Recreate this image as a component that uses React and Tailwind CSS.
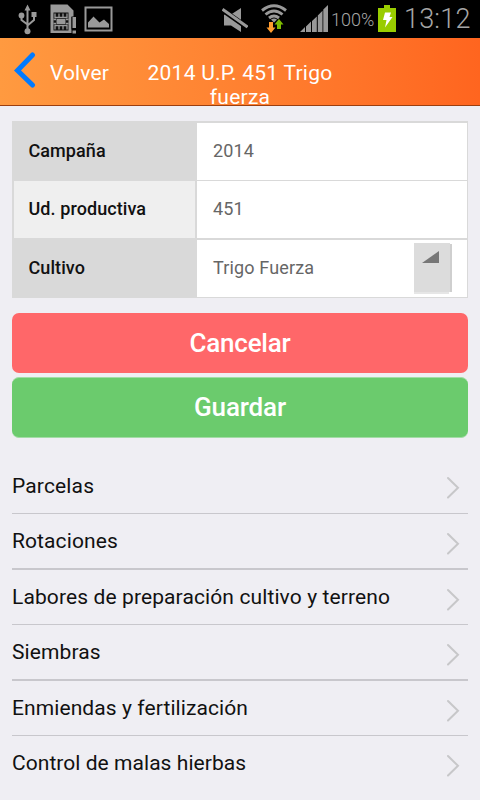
const items = [
  { label: 'Parcelas', row: 'h-14 border-b', text: 'leading-[56px] tracking-[0.15px]' },
  { label: 'Rotaciones', row: 'h-14 border-b-2', text: 'leading-[54px] tracking-[0.1px]' },
  { label: 'Labores de preparación cultivo y terreno', row: 'h-[55px] border-b', text: 'leading-[54px] tracking-[0.11px]' },
  { label: 'Siembras', row: 'h-14 border-b-2', text: 'leading-[54px] tracking-[0.1px]' },
  { label: 'Enmiendas y fertilización', row: 'h-[55px] border-b', text: 'leading-[54px] tracking-[0.09px]' },
  { label: 'Control de malas hierbas', row: 'h-16', text: 'leading-[54px] tracking-[0.05px]' },
];

function StatusBar() {
  return (
    <div className="flex h-[38px] shrink-0 items-start bg-black text-[#a6a6a6]">
      {/* usb */}
      <svg className="ml-[18px] mt-[4px] h-[31px] w-5 shrink-0" viewBox="0 0 20 31" fill="none" stroke="#999" strokeWidth="2">
        <path d="M9.500 5v22M3.500 12v4l6 4.500M16 10v6l-6.500 5.500" />
        <path d="M9.500 0.500l3 6h-6z" fill="#999" stroke="none" />
        <circle cx="3.500" cy="11.500" r="2.900" fill="#999" stroke="none" />
        <rect x="13.500" y="8" width="5" height="5" fill="#999" stroke="none" />
        <circle cx="9.500" cy="27.200" r="3" fill="#999" stroke="none" />
      </svg>
      {/* sim card */}
      <svg className="ml-[12px] mt-[4px] h-[31px] w-[27px] shrink-0" viewBox="0 0 27 31">
        <path d="M0.500 0.500h17l6 6v6.500h-2v16H0.500z" fill="#999" />
        <path d="M3.500 8.500h15v18h-15z" fill="#111" />
        <path d="M5 9.500v4h12v-4M9 9.500v4M13 9.500v4M5 25.500v-4h12v4M9 25.500v-4M13 25.500v-4M3.500 15.500h2.500M3.500 19.500h2.500M16 15.500h2.500M16 19.500h2.500" stroke="#999" strokeWidth="1.300" fill="none" />
        <rect x="6.500" y="15" width="9" height="5" fill="#999" />
        <path d="M21.500 12.500h5v13h-5z" fill="#000" />
        <path d="M22.500 13h3.500v11h-3.500zM22.500 26.500h3.500v3h-3.500z" fill="#999" />
      </svg>
      {/* picture */}
      <svg className="ml-[7px] mt-[6px] h-[26px] w-[29px] shrink-0" viewBox="0 0 29 26">
        <rect x="1.500" y="1.500" width="26" height="23" fill="none" stroke="#999" strokeWidth="2" />
        <path d="M4 21.500v-5l5.500-6 6 6 4.500-3 5 4.500v3.500z" fill="#999" />
      </svg>
      {/* muted speaker */}
      <svg className="ml-[109px] mt-[7px] h-[26px] w-[26px] shrink-0" viewBox="0 0 26 26">
        <path d="M2 7.500h7l10-6.500v24l-10-6.500H2z" fill="#999" />
        <path d="M0 2.500l26 18.500" stroke="#000" strokeWidth="5.200" />
        <path d="M0.500 2.300l25 17.800" stroke="#999" strokeWidth="3" />
      </svg>
      {/* wifi with traffic arrows */}
      <svg className="ml-[13px] mt-[4px] h-[30px] w-[27px] shrink-0" viewBox="0 0 27 30" fill="none">
        <path d="M1 6.500Q13 -3 25 6.500M4.500 10.500Q13 3.500 21.500 10.500M8 14Q13 10 18 14" stroke="#999" strokeWidth="2.900" />
        <path d="M10 15.500q3-2 6 0l-3 3z" fill="#999" />
        <path d="M8 18h4v5.500h2.500l-4.500 5.500-4.500-5.500H8z" fill="#ff9c2f" />
        <path d="M16 25v-4.500h-2.500L18 15l4.500 5.500H20V25z" fill="#7dbb00" />
      </svg>
      {/* signal */}
      <svg className="ml-[12px] mt-[5px] h-[27px] w-[29px] shrink-0" viewBox="0 0 29 27">
        <path d="M0 27h5v-5zM6 27h5V16.500l-5 5zM12 27h4.800V11.500L12 16zM17.800 27h4.700V5.800l-4.700 4.600zM23.300 27H28V0l-4.700 4.500z" fill="#999" />
      </svg>
      <span className="ml-[2px] mt-[10px] w-[43px] whitespace-nowrap text-[18px] font-light leading-5">100%</span>
      {/* battery */}
      <svg className="ml-[4px] mt-[5px] h-[27px] w-[19px] shrink-0" viewBox="0 0 19 27">
        <path d="M6 0h6v3H18v24H0V3h6z" fill="#99cc00" />
        <path d="M7 7.500h6l-1.500 4.500h3L7 22.500l1.500-7.500H5z" fill="#fff" />
      </svg>
      <span className="ml-[7px] mt-[3px] whitespace-nowrap text-[27px] font-light leading-8 tracking-[0.2px]">13:12</span>
    </div>
  );
}

function Header() {
  return (
    <header className="flex h-[68px] shrink-0 border-b border-[#9b3f10] bg-linear-to-r from-[#ff9a40] to-[#ff651f] text-[21px] leading-6 text-white">
      <svg className="ml-[14px] mt-[14px] h-9 w-[22px] shrink-0" viewBox="0 0 22 36" fill="none">
        <path d="M18.500 3L3.500 18.500l15 14.500" stroke="#007aff" strokeWidth="5" strokeLinecap="round" />
      </svg>
      <span className="ml-[14px] mt-[23px] w-[84px] tracking-[0.1px]">Volver</span>
      <h1 className="mt-[23px] w-[212px] text-center tracking-[0.25px]">2014 U.P. 451 Trigo fuerza</h1>
    </header>
  );
}

function Field({ label, value, row, labelBg, children }) {
  return (
    <div className={`flex border-[#d9d9d9] text-[18px] ${row}`}>
      <div className={`w-[185px] border-x-2 border-[#d9d9d9] pl-[14.500px] font-medium leading-[55px] tracking-[0.08px] text-[#111] ${labelBg}`}>{label}</div>
      <div className="flex flex-1 justify-between bg-white pl-4 leading-[55px] tracking-[0.15px] text-[#666]">
        <span>{value}</span>
        {children}
      </div>
    </div>
  );
}

export default function App() {
  return (
    <div className="flex h-[800px] w-[480px] flex-col overflow-hidden bg-[#efeef3] font-[Roboto,sans-serif]">
      <StatusBar />
      <Header />
      <main className="px-3 pt-[15px]">
        <section className="border-r border-t-2 border-[#d9d9d9]">
          <Field label="Campaña" value="2014" row="h-[58px] border-b" labelBg="bg-[#d9d9d9]" />
          <Field label="Ud. productiva" value="451" row="h-[59px] border-b-2" labelBg="bg-[#efefef]" />
          <Field label="Cultivo" value="Trigo Fuerza" row="h-[58px] border-b" labelBg="bg-[#d9d9d9]">
            <svg className="mr-[15px] mt-[3px] h-[51px] w-[38px]" viewBox="0 0 38 51" shapeRendering="crispEdges">
              <path d="M0 0h36v49H0z" fill="#dcdcdc" />
              <path d="M36 1h2v48h-2z" fill="#cfcfcf" />
              <path d="M0 49h35v2H0z" fill="#e6e6e6" />
              <path d="M8 20L25 8v12z" fill="#777" shapeRendering="auto" />
            </svg>
          </Field>
        </section>
        <button className="mt-[15px] block h-[60px] w-full rounded-[7px] bg-[#ff6769] text-[26px] font-medium leading-[60px] tracking-[-0.25px] text-white">Cancelar</button>
        <button className="mt-1 block h-[61px] w-full rounded-[7px] border-y border-[#a3dca6] bg-[#6bcb6d] text-[26px] font-medium leading-[59px] tracking-[-0.15px] text-white">Guardar</button>
        <ul className="mt-5">
          {items.map((item) => (
            <li key={item.label} className={`flex justify-between border-[#c8c7cc] ${item.row}`}>
              <span className={`whitespace-nowrap text-[21px] text-[#111] ${item.text}`}>{item.label}</span>
              <svg className="mr-2 mt-[18px] h-[23px] w-[14px]" viewBox="0 0 14 23" fill="none">
                <path d="M2 2l10 9.800L2 21.500" stroke="#c7c7c9" strokeWidth="2" strokeLinecap="round" />
              </svg>
            </li>
          ))}
        </ul>
      </main>
    </div>
  );
}
